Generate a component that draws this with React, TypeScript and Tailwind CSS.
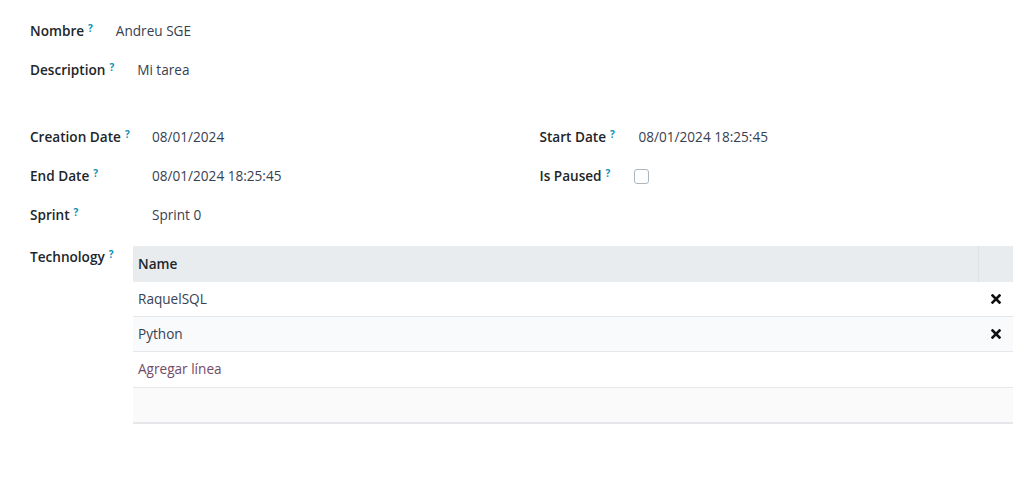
import React from "react";

const Help = () => (
  <sup className="ml-[4px] text-[10px] font-bold text-[#0f8fb5] relative -top-[4px]">?</sup>
);

const Label = ({ text, w }: { text: string; w?: string }) => (
  <div className={`shrink-0 font-semibold text-[#212529] ${w ?? ""}`}>
    {text}
    <Help />
  </div>
);

const CloseX = () => (
  <svg width="10" height="10" viewBox="0 0 10 10" className="block">
    <path d="M1.5 1.5 L8.5 8.5 M8.5 1.5 L1.5 8.5" stroke="#111" strokeWidth="2.6" strokeLinecap="square" />
  </svg>
);

export default function App() {
  const rows = ["RaquelSQL", "Python"];
  return (
    <div className="min-h-[479px] bg-white pl-[30px] pr-[17px] pt-[20px] text-[13.6px] text-[#374151] font-['Open_Sans','Noto_Sans',sans-serif]">
      {/* Top fields */}
      <div className="flex items-center h-[22px] gap-[23px]">
        <Label text="Nombre" />
        <div>Andreu SGE</div>
      </div>
      <div className="flex items-center h-[22px] mt-[17px] gap-[23px]">
        <Label text="Description" />
        <div>Mi tarea</div>
      </div>

      {/* Group */}
      <div className="grid grid-cols-2 mt-[45px]">
        <div className="flex flex-col gap-[17px]">
          <div className="flex items-center h-[22px]">
            <Label text="Creation Date" w="w-[122px]" />
            <div>08/01/2024</div>
          </div>
          <div className="flex items-center h-[22px]">
            <Label text="End Date" w="w-[122px]" />
            <div>08/01/2024 18:25:45</div>
          </div>
          <div className="flex items-center h-[22px]">
            <Label text="Sprint" w="w-[122px]" />
            <div>Sprint 0</div>
          </div>
        </div>
        <div className="flex flex-col gap-[17px] pl-[18px]">
          <div className="flex items-center h-[22px]">
            <Label text="Start Date" w="w-[99px]" />
            <div>08/01/2024 18:25:45</div>
          </div>
          <div className="flex items-center h-[22px]">
            <Label text="Is Paused" w="w-[94px]" />
            <div className="w-[15px] h-[15px] rounded-[3px] border border-[#adb5bd] bg-white" />
          </div>
        </div>
      </div>

      {/* Technology */}
      <div className="flex mt-[20px]">
        <div className="w-[103px] h-[22px] flex items-center">
          <Label text="Technology" />
        </div>
        <div className="flex-1">
          <div className="flex h-[36px] bg-[#e9ecef] font-semibold text-[#212529]">
            <div className="flex-1 flex items-center pl-[5px] border-r border-[#dee2e6]">Name</div>
            <div className="w-[34px]" />
          </div>
          {rows.map((r, i) => (
            <div
              key={r}
              className={`flex h-[35px] border-b border-[#e5e7eb] ${i % 2 === 1 ? "bg-[#f9fafb]" : "bg-white"}`}
            >
              <div className="flex-1 flex items-center pl-[5px]">{r}</div>
              <div className="w-[34px] flex items-center justify-center pr-[1px]">
                <CloseX />
              </div>
            </div>
          ))}
          <div className="flex h-[36px] border-b border-[#e5e7eb] items-center pl-[5px] text-[#714b67]">
            Agregar línea
          </div>
          <div className="h-[36px] bg-[#fafafa] border-b-2 border-[#e5e7eb]" />
        </div>
      </div>
    </div>
  );
}
